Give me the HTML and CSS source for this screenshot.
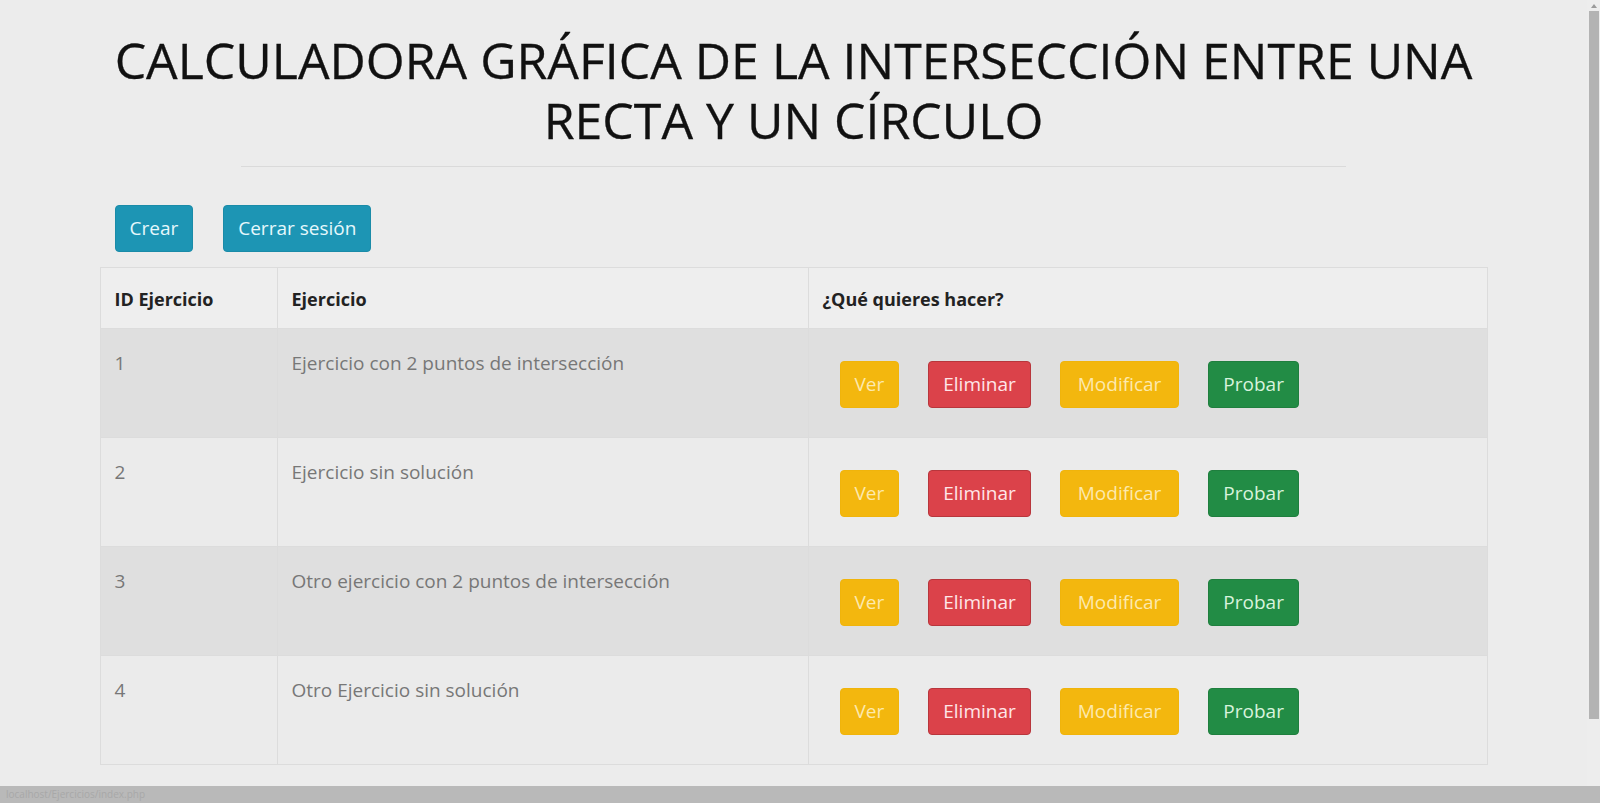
FILE: index.html
```html
<!DOCTYPE html>
<html lang="es">
<head>
<meta charset="utf-8">
<title>Calculadora gráfica</title>
<link rel="stylesheet" href="styles.css">
</head>
<body>
<div class="screen">
  <div class="viewport">
    <main class="container">
      <h1 class="title">CALCULADORA GRÁFICA DE LA INTERSECCIÓN ENTRE UNA RECTA Y UN CÍRCULO</h1>
      <hr class="rule">
      <div class="toolbar">
        <button class="btn btn-info">Crear</button>
        <button class="btn btn-info">Cerrar sesión</button>
      </div>
      <table class="grid">
        <colgroup>
          <col class="c-id"><col class="c-name"><col class="c-act">
        </colgroup>
        <thead>
          <tr><th>ID Ejercicio</th><th>Ejercicio</th><th>¿Qué quieres hacer?</th></tr>
        </thead>
        <tbody>
          <tr class="odd">
            <td>1</td><td>Ejercicio con 2 puntos de intersección</td>
            <td class="act"><div class="actions"><button class="btn btn-warning">Ver</button><button class="btn btn-danger">Eliminar</button><button class="btn btn-warning btn-wide">Modificar</button><button class="btn btn-success">Probar</button></div></td>
          </tr>
          <tr>
            <td>2</td><td>Ejercicio sin solución</td>
            <td class="act"><div class="actions"><button class="btn btn-warning">Ver</button><button class="btn btn-danger">Eliminar</button><button class="btn btn-warning btn-wide">Modificar</button><button class="btn btn-success">Probar</button></div></td>
          </tr>
          <tr class="odd">
            <td>3</td><td>Otro ejercicio con 2 puntos de intersección</td>
            <td class="act"><div class="actions"><button class="btn btn-warning">Ver</button><button class="btn btn-danger">Eliminar</button><button class="btn btn-warning btn-wide">Modificar</button><button class="btn btn-success">Probar</button></div></td>
          </tr>
          <tr>
            <td>4</td><td>Otro Ejercicio sin solución</td>
            <td class="act"><div class="actions"><button class="btn btn-warning">Ver</button><button class="btn btn-danger">Eliminar</button><button class="btn btn-warning btn-wide">Modificar</button><button class="btn btn-success">Probar</button></div></td>
          </tr>
        </tbody>
      </table>
    </main>
    <div class="vscroll"><div class="arrow"></div><div class="thumb"></div></div>
  </div>
  <div class="statusbar">localhost/Ejercicios/index.php</div>
</div>
</body>
</html>
```
FILE: styles.css
```css
html, body {
  margin: 0;
  padding: 0;
  height: 100%;
  overflow: hidden;
}
body {
  background: #ececec;
  font-family: "Open Sans", "Liberation Sans", sans-serif;
  color: #222;
}
.screen {
  display: flex;
  flex-direction: column;
  width: 1600px;
  height: 803px;
}
.viewport {
  flex: 1;
  display: flex;
  min-height: 0;
}
.container {
  flex: 1;
  display: flex;
  flex-direction: column;
  align-items: center;
  padding-top: 30px;
}
.title {
  margin: 0;
  width: 1420px;
  text-align: center;
  font-weight: 400;
  font-size: 50px;
  line-height: 60px;
  color: #111;
  letter-spacing: 0;
  -webkit-text-stroke: 0.3px #111;
}
.rule {
  margin: 16px 0 0 0;
  width: 1105px;
  border: 0;
  border-top: 1px solid #dadada;
}
.toolbar {
  width: 1388px;
  display: flex;
  gap: 30px;
  padding-left: 15px;
  margin-top: 38px;
  box-sizing: border-box;
}
.btn {
  font-family: inherit;
  font-size: 19px;
  line-height: 29px;
  padding: 8px 14px;
  border: 1px solid transparent;
  border-radius: 4px;
  cursor: pointer;
}
.btn-wide { padding-left: 17px; padding-right: 17px; }
.btn-info { background: #1d95b4; color: #e6f8fc; border-color: #1a8ba8; }
.btn-warning { background: #f3b70e; color: #fde9ad; border-color: #f0b40b; }
.btn-danger { background: #db424a; color: #ffe6e8; border-color: #b8363c; }
.btn-success { background: #228c45; color: #d8f3dd; border-color: #1f7f3e; }

.grid {
  margin-top: 15px;
  width: 1388px;
  border-collapse: collapse;
  font-size: 19px;
  line-height: 30px;
  border: 1px solid #dcdcdc;
}
.c-id { width: 177px; }
.c-name { width: 531px; }
.grid th, .grid td {
  border: 1px solid #dcdcdc;
  padding: 15px 14px;
  text-align: left;
  vertical-align: top;
}
.grid td { padding-top: 19px; color: #777; }
.grid td.act { padding-top: 15px; }
.grid th {
  padding-top: 16px;
  padding-bottom: 14px;
  font-weight: 700;
  color: #222;
  background: #eeeeee;
  font-size: 18px;
}
.grid tr.odd td { background: #dfdfdf; }
.grid tbody tr:not(.odd) td { background: #ebebeb; }
.actions {
  display: flex;
  gap: 29px;
  padding: 17px 0 14px 17px;
}
.vscroll {
  width: 13px;
  background: #ededed;
  display: flex;
  flex-direction: column;
  align-items: center;
}
.arrow {
  width: 0;
  height: 0;
  margin: 4px 0 3px;
  border-left: 3px solid transparent;
  border-right: 3px solid transparent;
  border-bottom: 4px solid #9a9a9a;
}
.thumb {
  width: 10px;
  height: 708px;
  background: #b3b3b3;
}
.statusbar {
  height: 17px;
  background: #b9b9b9;
  color: #a8a8a8;
  font-size: 10px;
  line-height: 17px;
  padding-left: 6px;
}
```
